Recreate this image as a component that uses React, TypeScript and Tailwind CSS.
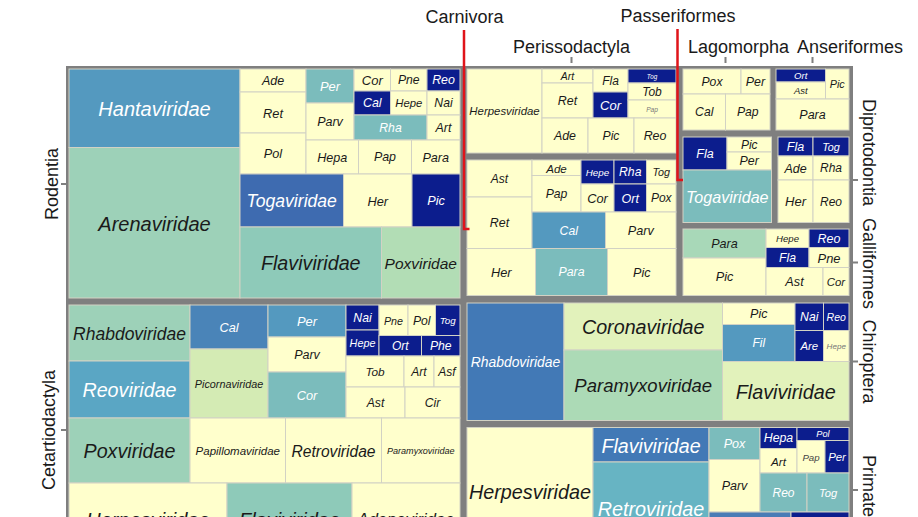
import React from "react";

const Y = "#ffffcc";
const N = "#0c1d8d";
const T = "#7bbcbc";
const B1 = "#5499bf";
const B2 = "#3e6bb0";
const B3 = "#4279b6";
const B4 = "#4a84b8";
const B5 = "#5aa6c4";
const B6 = "#67b4c3";
const G1 = "#9dd1b8";
const G2 = "#8ecab9";
const G3 = "#b2ddb5";
const G4 = "#a8d8b8";
const G5 = "#acdab6";
const L1 = "#d4ebb4";
const L2 = "#e2f2bb";

const DARK = new Set([N, T, B1, B2, B3, B4, B5, B6]);

type Cell = [number, number, number, number, string, string, number, string?];

const cells: Cell[] = [
  // Rodentia
  [69, 69, 240, 147.5, "Hantaviridae", B1, 20],
  [69, 147.5, 240, 298, "Arenaviridae", G1, 20],
  [240, 69, 306, 92, "Ade", Y, 12.5],
  [240, 92, 306, 133, "Ret", Y, 12.8],
  [240, 133, 306, 174, "Pol", Y, 12.7],
  [306, 69, 354, 103, "Per", T, 12.9],
  [306, 103, 354, 140, "Parv", Y, 12.5],
  [354, 69, 390.5, 91, "Cor", Y, 13],
  [390.5, 69, 427, 91, "Pne", Y, 12.2],
  [427, 69, 460, 91, "Reo", N, 12.4],
  [354, 91, 390.5, 115, "Cal", N, 12.4],
  [390.5, 91, 427, 115, "Hepe", Y, 11.3],
  [427, 91, 460, 115, "Nai", Y, 12.2],
  [354, 115, 427, 140, "Rha", T, 12.2],
  [427, 115, 460, 140, "Art", Y, 12.5],
  [306, 140, 358.5, 174, "Hepa", Y, 12.6],
  [358.5, 140, 411.5, 174, "Pap", Y, 12.4],
  [411.5, 140, 460, 174, "Para", Y, 12.6],
  [240, 174, 343.5, 227, "Togaviridae", B2, 17.6],
  [343.5, 174, 412, 227, "Her", Y, 12.8],
  [412, 174, 460, 227, "Pic", N, 12.7],
  [240, 227, 381.5, 298, "Flaviviridae", G2, 19.7],
  [381.5, 227, 460, 298, "Poxviridae", G3, 15.5],
  // Cetartiodactyla
  [69, 305, 190, 361, "Rhabdoviridae", G1, 17.5],
  [69, 361, 190, 418, "Reoviridae", B5, 19.7],
  [190, 305, 268, 349, "Cal", B4, 12.7],
  [190, 349, 268, 418, "Picornaviridae", L1, 10.8],
  [268, 305, 346, 337, "Per", B1, 12.9],
  [268, 337, 346, 372, "Parv", Y, 12.5],
  [268, 372, 346, 418, "Cor", T, 12.8],
  [346, 305, 379, 330, "Nai", N, 12.2],
  [379, 305, 408, 335.5, "Pne", Y, 10.7],
  [408, 305, 435.5, 335.5, "Pol", Y, 12.2],
  [435.5, 305, 460, 335.5, "Tog", N, 9.8],
  [346, 330, 379, 356, "Hepe", N, 10.8],
  [379, 335.5, 421.5, 356, "Ort", N, 12],
  [421.5, 335.5, 460, 356, "Phe", N, 12.2],
  [346, 356, 404, 387, "Tob", Y, 11.8],
  [404, 356, 434, 387, "Art", Y, 12],
  [434, 356, 460, 387, "Asf", Y, 12],
  [346, 387, 405, 418, "Ast", Y, 12.2],
  [405, 387, 460, 418, "Cir", Y, 12.2],
  [69, 418, 190, 483, "Poxviridae", G1, 19.7],
  [190, 418, 285.5, 483, "Papillomaviridae", Y, 11.5],
  [285.5, 418, 381.5, 483, "Retroviridae", Y, 15.6],
  [381.5, 418, 460, 483, "Paramyxoviridae", Y, 9.1],
  [69, 483, 227, 555, "Herpesviridae", Y, 20],
  [227, 483, 352, 555, "Flaviviridae", G2, 20],
  [352, 483, 460, 555, "Adenoviridae", Y, 16.6],
  // Perissodactyla
  [467, 69, 542, 153, "Herpesviridae", Y, 11.4],
  [542, 69, 593, 83, "Art", Y, 10.4],
  [542, 83, 593, 118, "Ret", Y, 12.4],
  [593, 69, 628, 92, "Fla", Y, 12],
  [593, 92, 628, 118, "Cor", N, 13],
  [628, 69, 676, 83, "Tog", N, 6.3],
  [628, 83, 676, 100, "Tob", Y, 12],
  [628, 100, 676, 118, "Pap", Y, 6.6, "#777"],
  [542, 118, 588, 153, "Ade", Y, 12.4],
  [588, 118, 634, 153, "Pic", Y, 12.2],
  [634, 118, 676, 153, "Reo", Y, 12.4],
  // Carnivora
  [467, 160, 532, 197, "Ast", Y, 12],
  [467, 197, 532, 248.5, "Ret", Y, 12.4],
  [532, 160, 581, 175.5, "Ade", Y, 11.6],
  [532, 175.5, 581, 212, "Pap", Y, 12.2],
  [581, 160, 614, 184, "Hepe", N, 9.8],
  [614, 160, 646.5, 184, "Rha", N, 12.2],
  [646.5, 160, 676, 184, "Tog", Y, 10.8],
  [581, 184, 614, 212, "Cor", Y, 12.8],
  [614, 184, 646.5, 212, "Ort", N, 12.5],
  [646.5, 184, 676, 212, "Pox", Y, 12],
  [532, 212, 605.5, 248.5, "Cal", B1, 12.2],
  [605.5, 212, 676, 248.5, "Parv", Y, 12.6],
  [467, 248.5, 535.5, 295.5, "Her", Y, 12.8],
  [535.5, 248.5, 607.5, 295.5, "Para", T, 12.3],
  [607.5, 248.5, 676, 295.5, "Pic", Y, 12.5],
  // Lagomorpha
  [683, 69, 741, 94, "Pox", Y, 12.2],
  [741, 69, 770, 94, "Per", Y, 12.4],
  [683, 94, 725.5, 130, "Cal", Y, 12.2],
  [725.5, 94, 770, 130, "Pap", Y, 12.2],
  // Anseriformes
  [776, 69, 825.5, 82, "Ort", N, 9.6],
  [776, 82, 825.5, 99, "Ast", Y, 9.5],
  [825.5, 69, 849, 99, "Pic", Y, 10.8],
  [776, 99, 849, 130, "Para", Y, 12.5],
  // Passeriformes
  [683, 137, 727, 170, "Fla", N, 12.5],
  [727, 137, 771.5, 152, "Pic", Y, 12],
  [727, 152, 771.5, 170, "Per", Y, 12.4],
  [683, 170, 771.5, 222.5, "Togaviridae", T, 16.1],
  // Diprotodontia
  [778, 137, 813, 156, "Fla", N, 12.5],
  [813, 137, 849, 156, "Tog", N, 10.8],
  [778, 156, 813, 180, "Ade", Y, 12.5],
  [813, 156, 849, 180, "Rha", Y, 12],
  [778, 180, 813, 222.5, "Her", Y, 13],
  [813, 180, 849, 222.5, "Reo", Y, 12],
  // Galliformes
  [683, 229, 766, 258, "Para", G4, 12.6],
  [683, 258, 766, 295.5, "Pic", Y, 12.7],
  [766, 229, 809, 247.5, "Hepe", Y, 9.6],
  [809, 229, 849, 247.5, "Reo", N, 12.5],
  [766, 247.5, 809, 267.5, "Fla", N, 12.2],
  [809, 247.5, 849, 267.5, "Pne", Y, 12.9],
  [766, 267.5, 823, 295.5, "Ast", Y, 12.7],
  [823, 267.5, 849, 295.5, "Cor", Y, 11.4],
  // Chiroptera
  [467, 303, 564, 420.5, "Rhabdoviridae", B3, 13.9],
  [564, 303, 722.5, 350, "Coronaviridae", L2, 19.7],
  [564, 350, 722.5, 420.5, "Paramyxoviridae", G5, 18.5],
  [722.5, 303, 795, 324.5, "Pic", Y, 12.5],
  [722.5, 324.5, 795, 361.5, "Fil", B1, 12],
  [795, 303, 823.5, 330.5, "Nai", N, 12.2],
  [823.5, 303, 849, 330.5, "Reo", N, 10.5],
  [795, 330.5, 823.5, 361.5, "Are", N, 11.4],
  [823.5, 330.5, 849, 361.5, "Hepe", Y, 8.1, "#777"],
  [722.5, 361.5, 849, 420.5, "Flaviviridae", L2, 19.8],
  // Primates
  [467, 427.5, 593, 555, "Herpesviridae", Y, 19.8],
  [593, 427.5, 709, 462, "Flaviviridae", B3, 19.6],
  [593, 462, 709, 555, "Retroviridae", B6, 19.8],
  [709, 427.5, 760, 459.5, "Pox", T, 12.6],
  [709, 459.5, 760, 512, "Parv", Y, 12.5],
  [760, 427.5, 797, 448.5, "Hepa", N, 12.3],
  [797, 427.5, 849, 440.5, "Pol", N, 9.2],
  [760, 448.5, 797, 473, "Art", Y, 11.7],
  [797, 440.5, 825, 473, "Pap", Y, 9.7, "#444"],
  [825, 440.5, 849, 473, "Per", N, 11.4],
  [760, 473, 807, 512, "Reo", T, 12],
  [807, 473, 849, 512, "Tog", T, 11.2],
  [709, 512, 791, 555, "", "#4a7cb6", 12],
  [791, 512, 849, 555, "", N, 12],
];

const FONT = '"Liberation Sans", Arial, sans-serif';

export default function App() {
  return (
    <div className="w-[918px] h-[517px] bg-white overflow-hidden">
      <svg width={918} height={517} viewBox="0 0 918 517" className="block">
        {/* panel frame */}
        <rect x={66} y={66} width={787} height={500} fill="#7f7f7f" />
        {cells.map(([x0, y0, x1, y1, label, fill, fs, tc], i) => (
          <g key={i}>
            <rect
              x={x0}
              y={y0}
              width={x1 - x0}
              height={y1 - y0}
              fill={fill}
              stroke="#d2d2c4"
              strokeWidth={1}
            />
            {label && (
              <text
                x={(x0 + x1) / 2}
                y={(y0 + y1) / 2 + fs * 0.04}
                textAnchor="middle"
                dominantBaseline="central"
                fontFamily={FONT}
                fontStyle="italic"
                fontSize={fs}
                fill={tc ?? (DARK.has(fill) ? "#ffffff" : "#1a1a1a")}
              >
                {label}
              </text>
            )}
          </g>
        ))}

        {/* axis ticks */}
        <g fill="#7f7f7f">
          <rect x={570.5} y={57} width={2} height={6} />
          <rect x={724.5} y={57} width={2} height={6} />
          <rect x={811.5} y={57} width={2} height={6} />
          <rect x={61} y={183} width={5} height={2} />
          <rect x={61} y={429} width={5} height={2} />
          <rect x={853} y={179} width={5} height={2} />
          <rect x={853} y={261.5} width={5} height={2} />
          <rect x={853} y={360.5} width={5} height={2} />
          <rect x={853} y={489} width={5} height={2} />
        </g>

        {/* axis labels */}
        <g fontFamily={FONT} fontSize={18} fill="#1a1a1a">
          <text x={464.5} y={23} textAnchor="middle">Carnivora</text>
          <text x={678} y={22} textAnchor="middle">Passeriformes</text>
          <text x={571.5} y={53} textAnchor="middle">Perissodactyla</text>
          <text x={738.5} y={53} textAnchor="middle">Lagomorpha</text>
          <text x={850} y={53} textAnchor="middle">Anseriformes</text>
          <text
            transform="translate(51.5 184) rotate(-90)"
            textAnchor="middle"
            dominantBaseline="central"
          >
            Rodentia
          </text>
          <text
            transform="translate(48.5 430) rotate(-90)"
            textAnchor="middle"
            dominantBaseline="central"
          >
            Cetartiodactyla
          </text>
          <text
            transform="translate(869 152.5) rotate(90)"
            textAnchor="middle"
            dominantBaseline="central"
          >
            Diprotodontia
          </text>
          <text
            transform="translate(869 263.5) rotate(90)"
            textAnchor="middle"
            dominantBaseline="central"
          >
            Galliformes
          </text>
          <text
            transform="translate(869 361.5) rotate(90)"
            textAnchor="middle"
            dominantBaseline="central"
          >
            Chiroptera
          </text>
          <text
            transform="translate(869 490.5) rotate(90)"
            textAnchor="middle"
            dominantBaseline="central"
          >
            Primates
          </text>
        </g>

        {/* red leader lines */}
        <g stroke="#e0141a" strokeWidth={2.5} fill="none">
          <path d="M464 30 V229 H469.5" />
          <path d="M677.5 29 V180 H683" />
        </g>
      </svg>
    </div>
  );
}
